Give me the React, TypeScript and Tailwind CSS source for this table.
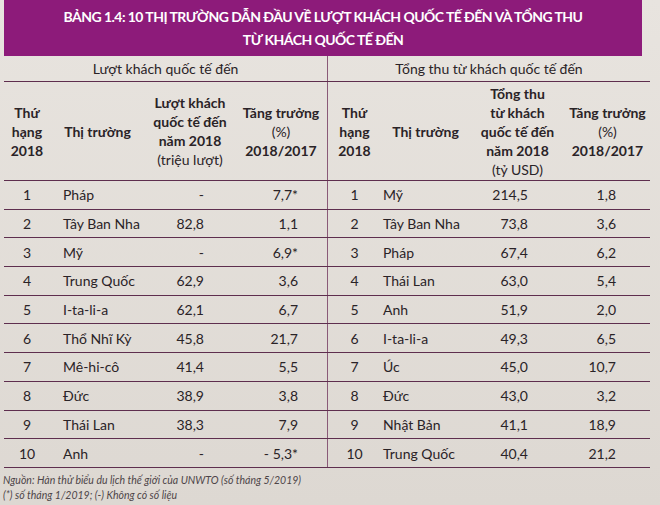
const LEFT_ROWS = [
  ['1', 'Pháp', '-', '7,7*'],
  ['2', 'Tây Ban Nha', '82,8', '1,1'],
  ['3', 'Mỹ', '-', '6,9*'],
  ['4', 'Trung Quốc', '62,9', '3,6'],
  ['5', 'I-ta-li-a', '62,1', '6,7'],
  ['6', 'Thổ Nhĩ Kỳ', '45,8', '21,7'],
  ['7', 'Mê-hi-cô', '41,4', '5,5'],
  ['8', 'Đức', '38,9', '3,8'],
  ['9', 'Thái Lan', '38,3', '7,9'],
  ['10', 'Anh', '-', '- 5,3*'],
];

const RIGHT_ROWS = [
  ['1', 'Mỹ', '214,5', '1,8'],
  ['2', 'Tây Ban Nha', '73,8', '3,6'],
  ['3', 'Pháp', '67,4', '6,2'],
  ['4', 'Thái Lan', '63,0', '5,4'],
  ['5', 'Anh', '51,9', '2,0'],
  ['6', 'I-ta-li-a', '49,3', '6,5'],
  ['7', 'Úc', '45,0', '10,7'],
  ['8', 'Đức', '43,0', '3,2'],
  ['9', 'Nhật Bản', '41,1', '18,9'],
  ['10', 'Trung Quốc', '40,4', '21,2'],
];

const COLS = 'grid grid-cols-[46px_95px_90px_92px_54px_89px_95px_85px]';

export default function App() {
  return (
    <div className="h-[505px] w-[660px] overflow-hidden bg-gradient-to-b from-[#e8e4df] to-[#ddd8d2] font-[family-name:Lato,'Noto_Sans',sans-serif] text-[#2a2327]">
      {/* Title banner */}
      <div className="ml-1 w-[638px] bg-[#8d1b7a] pt-[5px] pb-[5px] text-center text-[14px] leading-[23px] font-bold tracking-[-0.55px] uppercase text-white">
        <div>Bảng 1.4: 10 thị trường dẫn đầu về lượt khách quốc tế đến và tổng thu</div>
        <div>từ khách quốc tế đến</div>
      </div>

      <div className="ml-1 w-[646px]">
        {/* Section headers */}
        <div className="grid h-[26px] grid-cols-2 border-b-[1.5px] border-[#5e2e4e] text-[14px]">
          <div className="flex items-center justify-center">Lượt khách quốc tế đến</div>
          <div className="flex items-center justify-center border-l border-[#8a5a78]">
            Tổng thu từ khách quốc tế đến
          </div>
        </div>

        {/* Column headers */}
        <div className={`${COLS} h-[99px] border-b-[1.5px] border-[#5e2e4e] text-center text-[14px] leading-[19px] font-bold whitespace-nowrap`}>
          <div className="flex flex-col items-center justify-center">
            <span>Thứ</span>
            <span>hạng</span>
            <span>2018</span>
          </div>
          <div className="flex items-center justify-center">Thị trường</div>
          <div className="flex flex-col items-center justify-center">
            <span>Lượt khách</span>
            <span>quốc tế đến</span>
            <span>năm 2018</span>
            <span className="font-normal">(triệu lượt)</span>
          </div>
          <div className="flex flex-col items-center justify-center">
            <span>Tăng trưởng</span>
            <span className="font-normal">(%)</span>
            <span>2018/2017</span>
          </div>
          <div className="flex flex-col items-center justify-center border-l border-[#8a5a78]">
            <span>Thứ</span>
            <span>hạng</span>
            <span>2018</span>
          </div>
          <div className="flex items-center justify-center">Thị trường</div>
          <div className="flex flex-col items-center justify-center">
            <span>Tổng thu</span>
            <span>từ khách</span>
            <span>quốc tế đến</span>
            <span>năm 2018</span>
            <span className="font-normal">(tỷ USD)</span>
          </div>
          <div className="flex flex-col items-center justify-center">
            <span>Tăng trưởng</span>
            <span className="font-normal">(%)</span>
            <span>2018/2017</span>
          </div>
        </div>

        {/* Rows */}
        {LEFT_ROWS.map((l, i) => {
          const r = RIGHT_ROWS[i];
          return (
            <div
              key={l[0]}
              className={`${COLS} h-[28.7px] items-center border-b-[1.5px] border-[#5e2e4e] text-[14px] whitespace-nowrap`}
            >
              <div className="text-center">{l[0]}</div>
              <div className="pl-[13px]">{l[1]}</div>
              <div className="pr-[31px] text-right">{l[2]}</div>
              <div className="pr-[29px] text-right">{l[3]}</div>
              <div className="flex h-full items-center justify-center border-l border-[#8a5a78]">{r[0]}</div>
              <div className="pl-[2px]">{r[1]}</div>
              <div className="pr-[37px] text-right">{r[2]}</div>
              <div className="pr-[34px] text-right">{r[3]}</div>
            </div>
          );
        })}
      </div>

      {/* Notes */}
      <div className="mt-[5px] pl-[3px] text-[10.5px] leading-[15px] italic text-[#4d4548]">
        <p>Nguồn: Hàn thử biểu du lịch thế giới của UNWTO (số tháng 5/2019)</p>
        <p>(*) số tháng 1/2019; (-) Không có số liệu</p>
      </div>
    </div>
  );
}
